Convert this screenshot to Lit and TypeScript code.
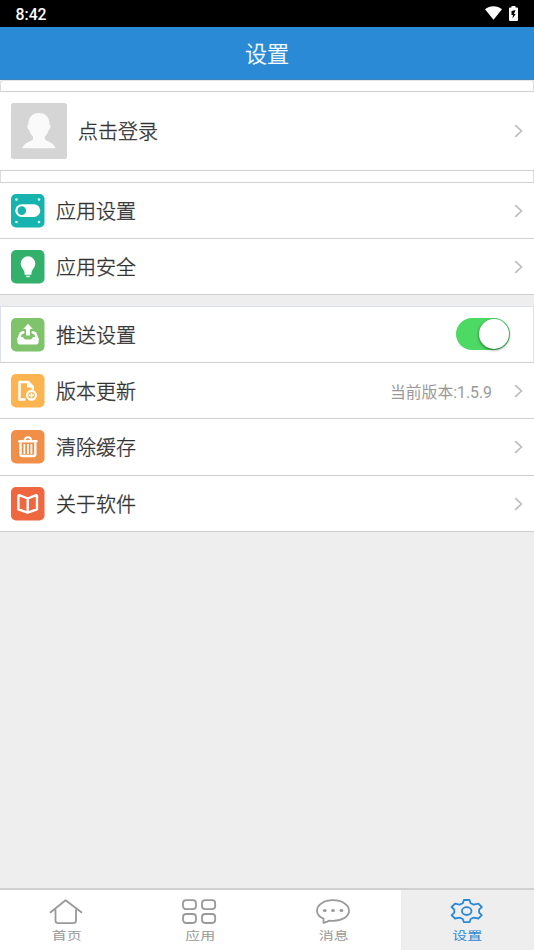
import { LitElement, html, css, svg, nothing } from "lit";
import { customElement, property, state } from "lit/decorators.js";
import { classMap } from "lit/directives/class-map.js";

const rowIcons: Record<string, unknown> = {
  toggle: svg`<rect width="33.500" height="33.500" rx="5" fill="#17b3ae"/>
    <g fill="#d9fffb"><circle cx="5.500" cy="5.500" r="1.300"/><circle cx="28" cy="5.500" r="1.300"/><circle cx="5.500" cy="28" r="1.300"/><circle cx="28" cy="28" r="1.300"/></g>
    <rect x="4.300" y="10.300" width="25" height="12.600" rx="6.300" fill="#fff"/><circle cx="10.800" cy="16.600" r="4.300" fill="#17b3ae"/>`,
  bulb: svg`<rect width="33.500" height="33.500" rx="5" fill="#33b06b"/>
    <path fill="#fff" d="M17 6.300a7.300 7.300 0 0 0-7.300 7.300c0 3.300 1.800 4.800 3 6.600.8 1.200.9 2.500.9 4.600h6.800c0-2.100.1-3.400.9-4.600 1.200-1.800 3-3.300 3-6.600A7.300 7.300 0 0 0 17 6.300z"/>
    <path fill="#fff" d="M14.800 25.700h4.400l-.9 1.500h-2.600z"/>`,
  upload: svg`<rect width="33.500" height="33.500" rx="5" fill="#7fc36b"/>
    <path fill="#fff" d="M17 5.800l4.800 5.200h-2.800v6.500h-4V11h-2.800z"/>
    <path fill="none" stroke="#fff" stroke-width="2.600" stroke-linejoin="round" stroke-linecap="round" d="M12.300 14.300l-2.600 1.200-2.100 5.600M21.700 14.300l2.600 1.200 2.100 5.600"/>
    <path fill="#fff" d="M8 18.900h3.600c.9 0 1.600 2.700 2.900 2.700h5c1.300 0 2-2.700 2.900-2.700H26c1 0 1.600 1 1.600 2v3c0 1.600-.9 2.500-2.400 2.500H8.800c-1.500 0-2.400-.9-2.400-2.500v-3c0-1 .6-2 1.600-2z"/>`,
  update: svg`<rect width="33.500" height="33.500" rx="5" fill="#fbb44f"/>
    <path fill="none" stroke="#fff" stroke-width="2.500" stroke-linejoin="round" d="M14.500 25.600H8.500V8h8.800l4.400 4.600v3.200"/>
    <path fill="#fff" d="M16 7.500l6 6h-6z"/>
    <circle cx="20.500" cy="21.300" r="4.400" fill="none" stroke="#fff" stroke-width="2.200"/>
    <path stroke="#fff" stroke-width="1.600" d="M18 21.300h5M20.500 18.800v5"/>`,
  trash: svg`<rect width="33.500" height="33.500" rx="5" fill="#f18f49"/>
    <path fill="none" stroke="#fff" stroke-width="2" d="M13.600 11c0-5 6.600-5 6.600 0"/>
    <rect x="7.100" y="10" width="19.600" height="2.600" rx="1" fill="#fff"/>
    <path fill="none" stroke="#fff" stroke-width="2.400" stroke-linejoin="round" d="M9.500 12.500v11.700q0 1.800 1.800 1.800h11.200q1.800 0 1.800-1.800V12.500"/>
    <path stroke="#fff" stroke-width="1.800" d="M13.400 14v10M16.900 14v10M20.400 14v10"/>`,
  book: svg`<rect width="33.500" height="33.500" rx="5" fill="#ee673f"/>
    <path fill="none" stroke="#fff" stroke-width="2.400" stroke-linejoin="round" d="M16.700 11.500L8.300 8.200Q7.400 8 7.400 9v13.300l9.300 3.400 9.300-3.400V9q0-1-.9-.8zM16.700 11.500v14.200"/>`,
};

const tabIcons: Record<string, unknown> = {
  home: svg`<path d="M2 13.700L17.600 1.200 34 13.700M7.500 10.500v11.300q0 2.400 3.200 2.400H25q3 0 3-2.400V10.500"/>`,
  apps: svg`<rect x="2" y="1.200" width="13" height="9" rx="3.200"/><rect x="21" y="1.200" width="13.200" height="9" rx="3.200"/><rect x="2" y="15" width="13" height="9" rx="3.200"/><rect x="21" y="15" width="13.200" height="9" rx="3.200"/>`,
  chat: svg`<path d="M8.500 19.700C4.500 18 2 15.500 2 11.700 2 5.700 9.200 1.200 18 1.200s16 4.500 16 10.500-7.200 10.200-16 10.200c-1.300 0-2.300 0-3.500-.3q-2.500 1.500-6 2.300z"/>
    <g fill="currentColor" stroke="none"><ellipse cx="9.800" cy="11.500" rx="1.900" ry="1.500"/><ellipse cx="18" cy="11.500" rx="1.900" ry="1.500"/><ellipse cx="26.400" cy="11.500" rx="1.900" ry="1.500"/></g>`,
  gear: svg`<path d="M15.900 1h5.600l1.100 3.200 3.200 1.400 4.600-.9 3.400 3.300-2.700 2.600v3l2.700 2.600-3.400 3.300-4.600-.9-3.200 1.400-1.100 3.200h-5.600l-1.100-3.200-3.200-1.400-4.600.9L3.600 16.200l2.700-2.600v-3L3.600 8l3.400-3.300 4.600.9 3.200-1.400z"/><ellipse cx="18.700" cy="12.100" rx="4.800" ry="3.900"/>`,
};

@customElement("settings-row")
class SettingsRow extends LitElement {
  @property() icon = "";
  @property() label = "";
  @property() note = "";
  @property({ type: Boolean }) arrow = false;

  static styles = css`
    :host { display: flex; align-items: center; box-sizing: border-box; height: 56px; padding: 0 11px; background: #fff; border-bottom: 1px solid #cfcfcf; color: #333; }
    .icon { width: 34px; height: 34px; flex: none; }
    .label { margin-left: 11px; padding-top: 2px; flex: 1; font-size: 20px; font-weight: 300; -webkit-text-stroke: 0.35px currentColor; line-height: 28px; }
    .note { font-size: 15.8px; color: #999; margin-right: 22px; padding-top: 1px; }
    .arrow { width: 9px; height: 14px; flex: none; fill: none; stroke: #bdbdbd; stroke-width: 1.7; }
  `;

  render() {
    return html`
      <slot name="lead"><svg class="icon" viewBox="0 0 34 34">${rowIcons[this.icon]}</svg></slot>
      <span class="label">${this.label}</span>
      ${this.note ? html`<span class="note">${this.note}</span>` : nothing}
      <slot></slot>
      ${this.arrow ? html`<svg class="arrow" viewBox="0 0 9 14"><path d="M1.200 1.200L7.400 7l-6.200 5.800"/></svg>` : nothing}
    `;
  }
}

@customElement("toggle-switch")
class ToggleSwitch extends LitElement {
  @property({ type: Boolean }) on = false;

  static styles = css`
    :host { display: block; margin-right: 13px; padding-bottom: 1px; }
    .track { display: flex; box-sizing: border-box; width: 54px; height: 32px; padding: 1px; border-radius: 16px; background: #ddd; }
    .track.on { justify-content: flex-end; background: #4cd964; }
    .knob { width: 30px; height: 30px; border-radius: 50%; background: #fff; box-shadow: 0 1px 3px rgba(0, 0, 0, 0.55); }
  `;

  render() {
    return html`<div class=${classMap({ track: true, on: this.on })} @click=${() => (this.on = !this.on)}><div class="knob"></div></div>`;
  }
}

@customElement("app-root")
class AppRoot extends LitElement {
  @state() private tab = "gear";

  static styles = css`
    :host { display: flex; flex-direction: column; height: 950px; overflow: hidden; background: #eee; font-family: Roboto, "Noto Sans CJK SC", sans-serif; }
    .status { display: flex; align-items: center; height: 27px; flex: none; box-sizing: border-box; padding: 0 16px 1px 15.5px; background: #000; color: #fff; font-size: 15.8px; font-weight: 500; }
    .time { flex: 1; padding-top: 2px; }
    .wifi { width: 17px; height: 14px; margin-right: 7px; }
    .battery { width: 9px; height: 15px; }
    .title { height: 53px; flex: none; box-sizing: border-box; background: #2a8ad6; border-bottom: 1px solid #3b84c0; color: #fff; font-size: 22px; font-weight: 300; -webkit-text-stroke: 0.35px currentColor; line-height: 55px; text-align: center; }
    .strip { height: 12px; flex: none; box-sizing: border-box; background: #fff; border: 1px solid #ddd; border-top-color: #e4e4e4; border-bottom-color: #cfcfcf; }
    .strip.top { border-radius: 4px 4px 0 0; }
    .strip.inner { border-top: 0; }
    .list { flex: 1; }
    .login { height: 79px; }
    .tall { height: 57px; }
    .push { height: 57px; margin-top: 11px; border: 1px solid #dbe0ea; border-bottom-color: #cfcfcf; padding: 0 10px; }
    .avatar { width: 56px; height: 56px; flex: none; }
    .tabs { display: grid; grid-template-columns: repeat(4, 1fr); height: 62px; flex: none; box-sizing: border-box; border-top: 2px solid #d0d0d0; background: #fff; }
    .tab { display: flex; flex-direction: column; align-items: center; padding-top: 9px; color: #999; }
    .tab.active { background: #eee; color: #2a8ad6; }
    .tab svg { width: 36px; height: 27px; margin-right: 2px; fill: none; stroke: currentColor; stroke-width: 1.8; stroke-linejoin: round; }
    .name { font-size: 15px; line-height: 20px; transform: scaleY(0.79); }
  `;

  render() {
    const tabs = [["home", "首页"], ["apps", "应用"], ["chat", "消息"], ["gear", "设置"]];
    return html`
      <div class="status">
        <span class="time">8:42</span>
        <svg class="wifi" viewBox="0 0 17 14"><path fill="#fff" d="M0 3.200C4.800-.9 12.200-.9 17 3.200L8.500 13.800z"/></svg>
        <svg class="battery" viewBox="0 0 9 15"><path fill="#fff" d="M2.500 0h4v1.500H8q1 0 1 1V14q0 1-1 1H1q-1 0-1-1V2.500q0-1 1-1h1.500z"/><path fill="#000" d="M6.500 4L2.500 5v4h1.500l-.5 3.500L6.700 8H5z"/></svg>
      </div>
      <div class="title">设置</div>
      <div class="list">
        <div class="strip top"></div>
        <settings-row class="login" label="点击登录" arrow>
          <svg slot="lead" class="avatar" viewBox="0 0 56 56">
            <rect width="56" height="56" rx="2.500" fill="#d5d5d5"/>
            <path fill="#fafafa" d="M28 10c-6.800 0-10.800 4.800-10.600 11.500-1.700.5-1.300 4.500.7 5.300.7 2.800 1.900 5 3.900 6.700v2.700c-2.800 3-8.800 2.900-10.700 9h33.300c-1.900-6.100-7.900-6-10.700-9v-2.700c2-1.700 3.200-3.900 3.900-6.700 2-.8 2.400-4.800.7-5.300C38.800 14.800 34.800 10 28 10z"/>
          </svg>
        </settings-row>
        <div class="strip inner"></div>
        <settings-row icon="toggle" label="应用设置" arrow></settings-row>
        <settings-row icon="bulb" label="应用安全" arrow></settings-row>
        <settings-row class="push" icon="upload" label="推送设置"><toggle-switch on></toggle-switch></settings-row>
        <settings-row icon="update" label="版本更新" note="当前版本:1.5.9" arrow></settings-row>
        <settings-row class="tall" icon="trash" label="清除缓存" arrow></settings-row>
        <settings-row icon="book" label="关于软件" arrow></settings-row>
      </div>
      <nav class="tabs">
        ${tabs.map(([id, name]) => html`
          <div class=${classMap({ tab: true, active: this.tab === id })} @click=${() => (this.tab = id)}>
            <svg viewBox="0 0 36 27">${tabIcons[id]}</svg>
            <span class="name">${name}</span>
          </div>`)}
      </nav>
    `;
  }
}
